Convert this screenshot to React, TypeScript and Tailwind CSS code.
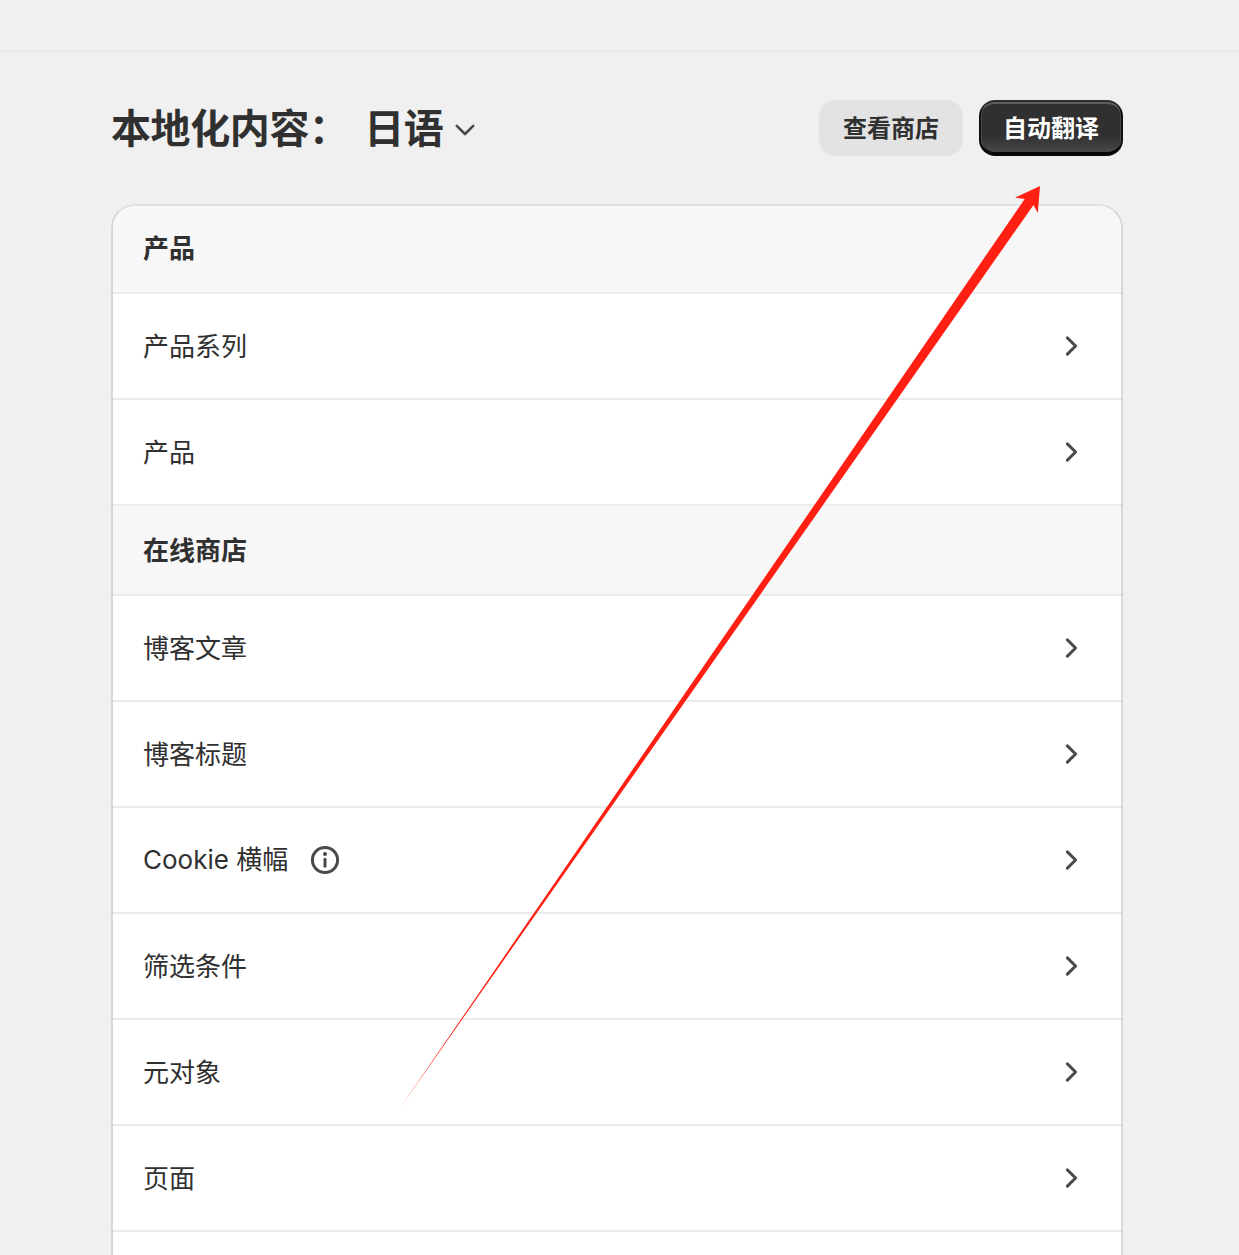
import clsx from 'clsx'

type ListItem = {
  label: string
  header?: boolean
  info?: boolean
}

const items: ListItem[] = [
  { label: '产品', header: true },
  { label: '产品系列' },
  { label: '产品' },
  { label: '在线商店', header: true },
  { label: '博客文章' },
  { label: '博客标题' },
  { label: 'Cookie 横幅', info: true },
  { label: '筛选条件' },
  { label: '元对象' },
  { label: '页面' },
]

function ChevronRight() {
  return (
    <svg className="h-8 w-8 shrink-0" viewBox="0 0 32 32" fill="none" stroke="#4a4a4a" strokeWidth="3" strokeLinecap="round" strokeLinejoin="round">
      <path d="M12.4 7.9 L20.6 16 L12.4 24.1" />
    </svg>
  )
}

function ChevronDown() {
  return (
    <svg className="h-8 w-8 shrink-0" viewBox="0 0 32 32" fill="none" stroke="#4a4a4a" strokeWidth="2.6" strokeLinecap="round" strokeLinejoin="round">
      <path d="M7.8 11.8 L16 20 L24.2 11.8" />
    </svg>
  )
}

function InfoIcon() {
  return (
    <svg className="ml-[21px] h-8 w-8 shrink-0" viewBox="0 0 32 32" fill="none">
      <circle cx="16" cy="16" r="12.6" stroke="#4a4a4a" strokeWidth="3" />
      <path d="M16 15.2 V22.2" stroke="#4a4a4a" strokeWidth="3" strokeLinecap="round" />
      <circle cx="16" cy="10" r="2" fill="#4a4a4a" />
    </svg>
  )
}

function Row({ item }: { item: ListItem }) {
  if (item.header) {
    return (
      <div className="-mx-0.5 h-[90px] shrink-0 border-x-2 border-b-2 border-x-transparent border-b-black/[0.08] bg-[#f7f7f7] bg-clip-padding px-[30px] pt-[25px] first:h-[88px] first:rounded-t-[24px] first:pt-[23px]">
        <h2 className="text-[26px] leading-[40px] font-bold">{item.label}</h2>
      </div>
    )
  }

  return (
    <div className="-mx-0.5 flex h-[106px] shrink-0 items-center border-x-2 border-b-2 border-x-transparent border-b-black/[0.08] pr-[34px] pl-[30px]">
      <span className={clsx('text-[26px] leading-[40px]', !item.info && 'pt-0.5')}>{item.label}</span>
      {item.info && <InfoIcon />}
      <span className="ml-auto">
        <ChevronRight />
      </span>
    </div>
  )
}

function Arrow() {
  return (
    <svg className="pointer-events-none absolute top-0 left-0 h-[1255px] w-[1239px]" viewBox="0 0 1239 1255">
      <path d="M1040 186 L1015 197.7 L1024.7 199 L400 1108 L1033.5 205 L1037.8 213 Z" fill="#ff2013" />
    </svg>
  )
}

export default function App() {
  const button = 'flex h-14 w-36 items-center justify-center rounded-[16px] pt-px text-[24px] leading-8 font-bold'

  return (
    <div className="relative flex h-[1255px] w-[1239px] flex-col overflow-hidden bg-[#f0f0f0] font-['Inter','Noto_Sans_CJK_SC',sans-serif] text-[#303030]">
      <div className="h-[52px] shrink-0 border-b-2 border-[#eaeaea]" />

      <header className="mt-12 mr-[116px] ml-[111px] flex h-14 shrink-0 items-center justify-between">
        <div className="flex items-center pt-0.5 text-[40px] leading-[56px] font-bold tracking-[-0.4px]">
          <h1>本地化内容：</h1>
          <button type="button" className="ml-[15.6px] flex items-center">
            日语
            <span className="mt-0.5 ml-[5.8px]">
              <ChevronDown />
            </span>
          </button>
        </div>
        <div className="flex gap-4">
          <button type="button" className={clsx(button, 'bg-[#e3e3e3]')}>
            查看商店
          </button>
          <button
            type="button"
            className={clsx(
              button,
              'bg-[#303030] bg-linear-to-b from-[#303030] from-63% to-[#4d4d4d] text-white',
              'shadow-[inset_0_2px_0_#2c2c2c,inset_2px_0_0_#101010,inset_-2px_0_0_#101010,inset_0_-4px_0_#080808,inset_0_4px_0_#5c5c5c,inset_3px_0_0_#4a4a4a,inset_-3px_0_0_#4a4a4a]',
            )}
          >
            自动翻译
          </button>
        </div>
      </header>

      <main className="mt-12 mr-[116px] ml-[111px] flex h-[1100px] shrink-0 flex-col rounded-t-[24px] border-2 border-[#d8d8d8] border-t-[#e0e0e0] bg-white">
        {items.map((item, index) => (
          <Row key={index} item={item} />
        ))}
      </main>

      <Arrow />
    </div>
  )
}
